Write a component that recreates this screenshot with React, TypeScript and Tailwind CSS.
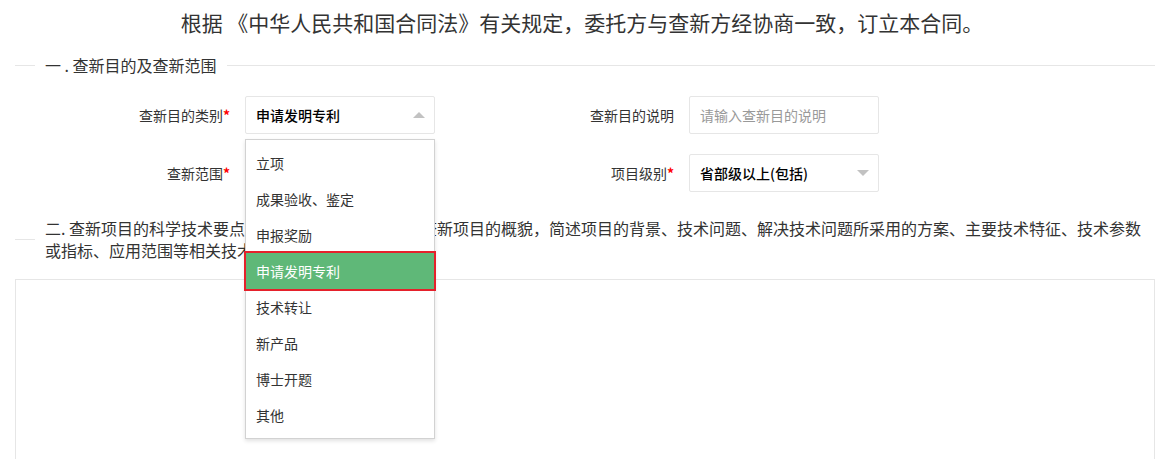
import React from 'react';

const options = ['立项', '成果验收、鉴定', '申报奖励', '申请发明专利', '技术转让', '新产品', '博士开题', '其他'];

function Label({ text, required, width }: { text: string; required?: boolean; width: string }) {
  return (
    <div className={`${width} shrink-0 pr-[15px] text-right text-[14px] text-[#333]`}>
      {text}
      {required && <span className="font-bold text-[#ff0000]">*</span>}
    </div>
  );
}

function Arrow({ up }: { up?: boolean }) {
  return up ? (
    <span className="absolute right-[10px] top-[16px] h-0 w-0 border-x-[6px] border-b-[6px] border-x-transparent border-b-[#c2c2c2]" />
  ) : (
    <span className="absolute right-[10px] top-[16px] h-0 w-0 border-x-[6px] border-t-[6px] border-x-transparent border-t-[#c2c2c2]" />
  );
}

export default function App() {
  const selected = '申请发明专利';

  return (
    <div className="min-h-[459px] w-full bg-white font-['Noto_Sans_CJK_SC','Microsoft_YaHei',sans-serif] text-[#333]">
      <div className="h-[44px] text-center text-[21px] leading-[44px] text-[#333]">
        根据 《中华人民共和国合同法》有关规定，委托方与查新方经协商一致，订立本合同。
      </div>

      <fieldset className="mt-[10px] ml-[15px] mr-[9px] border-0 border-t border-[#e6e6e6]">
        <legend className="ml-[20px] px-[10px] text-[16px] leading-[22px] text-[#333]">一 . 查新目的及查新范围</legend>
      </fieldset>

      <div className="mt-[20px] flex h-[38px] items-center">
        <Label text="查新目的类别" required width="w-[245px]" />
        <div className="relative h-[38px] w-[190px] shrink-0">
          <div className="h-full rounded-[2px] border border-[#e6e6e6] bg-white pl-[10px] text-[14px] font-medium leading-[36px] text-black">
            {selected}
          </div>
          <Arrow up />
          <div className="absolute left-0 top-[calc(100%+5px)] z-10 w-full border border-[#d2d2d2] bg-white py-[5px] shadow-[0_2px_4px_rgba(0,0,0,0.12)]">
            {options.map((o) =>
              o === selected ? (
                <div key={o} className="relative h-[36px] bg-[#5fb878] px-[10px] text-[14px] leading-[36px] text-white ring-2 ring-[#e5212b]">
                  {o}
                </div>
              ) : (
                <div key={o} className="h-[36px] px-[10px] text-[14px] leading-[36px] text-[#333]">
                  {o}
                </div>
              )
            )}
          </div>
        </div>
        <Label text="查新目的说明" width="w-[254px]" />
        <div className="h-[38px] w-[190px] shrink-0 rounded-[2px] border border-[#e6e6e6] pl-[10px] text-[14px] leading-[36px] text-[#999]">
          请输入查新目的说明
        </div>
      </div>

      <div className="mt-[20px] flex h-[38px] items-center">
        <Label text="查新范围" required width="w-[245px]" />
        <div className="relative h-[38px] w-[190px] shrink-0">
          <div className="h-full rounded-[2px] border border-[#e6e6e6] bg-white pl-[10px] text-[14px] leading-[36px] text-[#999]">请选择</div>
          <Arrow />
        </div>
        <Label text="项目级别" required width="w-[254px]" />
        <div className="relative h-[38px] w-[190px] shrink-0">
          <div className="h-full rounded-[2px] border border-[#e6e6e6] bg-white pl-[10px] text-[14px] font-medium leading-[36px] text-black">
            省部级以上(包括)
          </div>
          <Arrow />
        </div>
      </div>

      <fieldset className="mt-[25px] ml-[15px] mr-[9px] border-0 border-t border-[#e6e6e6]">
        <legend className="ml-[20px] w-[calc(100%-20px)] px-[10px] text-[16px] leading-[22px] text-[#333]">
          二. 查新项目的科学技术要点（请用简洁文字概括描述查新项目的概貌，简述项目的背景、技术问题、解决技术问题所采用的方案、主要技术特征、技术参数
          <br />
          或指标、应用范围等相关技术内容）
        </legend>
      </fieldset>

      <div className="mt-[18px] ml-[15px] mr-[9px] h-[200px] border border-[#e6e6e6] bg-white" />
    </div>
  );
}
